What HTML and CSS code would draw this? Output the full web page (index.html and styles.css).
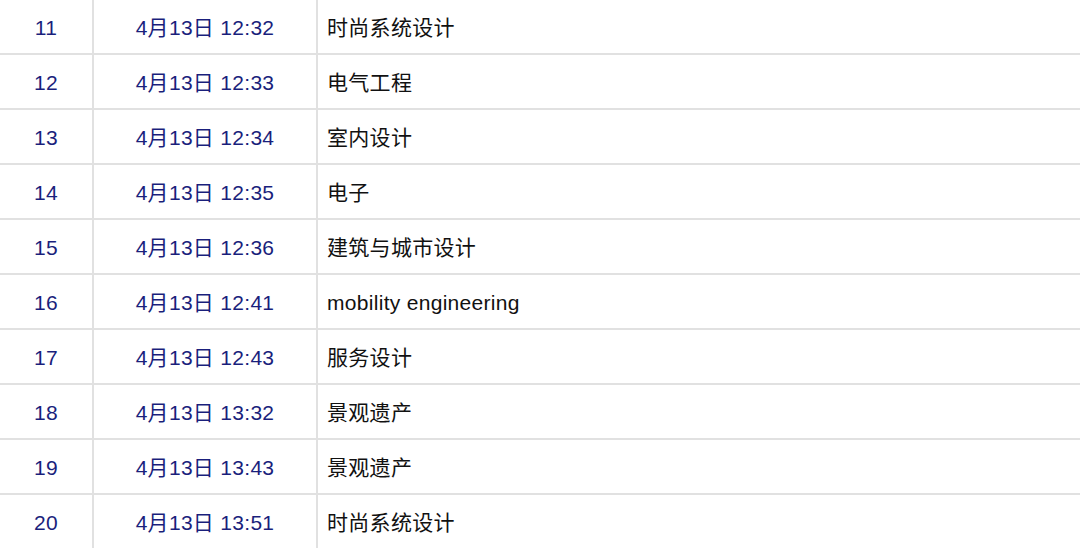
FILE: index.html
```html
<!DOCTYPE html>
<html lang="zh-CN">
<head>
<meta charset="utf-8">
<link rel="stylesheet" href="styles.css">
</head>
<body>
<div class="table">
  <div class="row"><div class="cell num">11</div><div class="cell time">4月13日 12:32</div><div class="cell name">时尚系统设计</div></div>
  <div class="row"><div class="cell num">12</div><div class="cell time">4月13日 12:33</div><div class="cell name">电气工程</div></div>
  <div class="row"><div class="cell num">13</div><div class="cell time">4月13日 12:34</div><div class="cell name">室内设计</div></div>
  <div class="row"><div class="cell num">14</div><div class="cell time">4月13日 12:35</div><div class="cell name">电子</div></div>
  <div class="row"><div class="cell num">15</div><div class="cell time">4月13日 12:36</div><div class="cell name">建筑与城市设计</div></div>
  <div class="row"><div class="cell num">16</div><div class="cell time">4月13日 12:41</div><div class="cell name">mobility engineering</div></div>
  <div class="row"><div class="cell num">17</div><div class="cell time">4月13日 12:43</div><div class="cell name">服务设计</div></div>
  <div class="row"><div class="cell num">18</div><div class="cell time">4月13日 13:32</div><div class="cell name">景观遗产</div></div>
  <div class="row"><div class="cell num">19</div><div class="cell time">4月13日 13:43</div><div class="cell name">景观遗产</div></div>
  <div class="row last"><div class="cell num">20</div><div class="cell time">4月13日 13:51</div><div class="cell name">时尚系统设计</div></div>
</div>
</body>
</html>
```

FILE: styles.css
```css
html, body {
  margin: 0;
  padding: 0;
  background: #ffffff;
}

body {
  font-family: "Liberation Sans", "Noto Sans CJK SC", sans-serif;
  font-size: 21px;
  letter-spacing: 0.3px;
}

.table {
  width: 1080px;
  height: 550px;
  overflow: hidden;
}

.row {
  display: grid;
  grid-template-columns: 94px 224px 1fr;
  height: 55px;
  box-sizing: border-box;
  border-bottom: 2px solid #e1e1e1;
}

.row.last {
  border-bottom: none;
}

.cell {
  box-sizing: border-box;
  height: 53px;
  padding-top: 1px;
  line-height: 54px;
  white-space: nowrap;
}

.num,
.time {
  text-align: center;
  color: #1a1f7c;
  border-right: 2px solid #e1e1e1;
}

.name {
  padding-left: 9px;
  color: #111111;
}
```
